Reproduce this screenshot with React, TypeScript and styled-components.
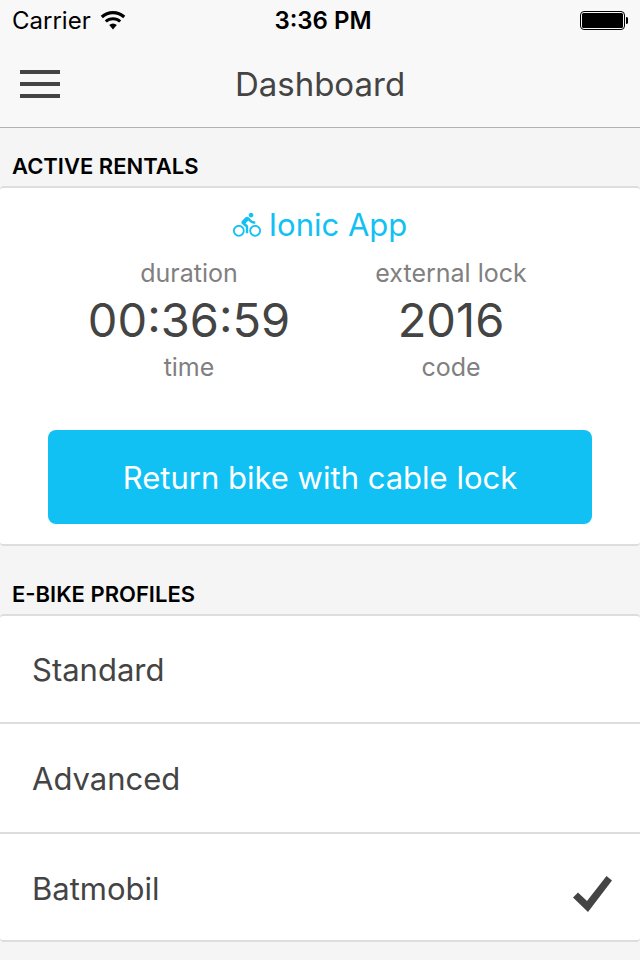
import React, { useState } from "react";
import styled, { createGlobalStyle } from "styled-components";
import { MdDirectionsBike } from "react-icons/md";

const GlobalStyle = createGlobalStyle`
  * { box-sizing: border-box; }
  body {
    margin: 0;
    background: #f5f5f5;
    color: #444;
    font-family: Inter, "Liberation Sans", sans-serif;
  }
  h1, h2, h3, p { margin: 0; font-weight: 400; }
`;

const TopArea = styled.header`
  background: #f8f8f8;
  border-bottom: 1px solid #b2b2b2;
`;

const StatusBar = styled.div`
  display: grid;
  grid-template-columns: 1fr auto 1fr;
  align-items: center;
  height: 40px;
  padding: 2px 12px 0;
  color: #000;
  font-size: 24px;
  line-height: 28px;
`;

const Carrier = styled.div`
  display: flex;
  align-items: center;
  gap: 9px;
`;

const Clock = styled.time`
  font-weight: 600;
  padding-left: 6px;
`;

const Battery = styled.svg`
  justify-self: end;
`;

const TitleBar = styled.div`
  display: grid;
  grid-template-columns: 40px 1fr 40px;
  align-items: center;
  height: 87px;
  padding: 0 20px;
`;

const MenuButton = styled.button`
  display: flex;
  padding: 0;
  border: 0;
  background: none;
  cursor: pointer;
`;

const Title = styled.h1`
  font-size: 33px;
  line-height: 40px;
  text-align: center;
`;

const SectionTitle = styled.h2`
  padding: 23px 12px 5px;
  color: #000;
  font-size: 22px;
  font-weight: 600;
  line-height: 30px;
`;

const Card = styled.div`
  background: #fff;
  border: solid #ddd;
  border-width: 2px 0;
  border-radius: 4px;
`;

const RentalCard = styled(Card)`
  padding: 16px 48px 20px;
  margin-bottom: 10px;
`;

const RentalName = styled.h3`
  display: flex;
  justify-content: center;
  align-items: center;
  gap: 8px;
  color: #11c1f3;
  font-size: 31px;
  line-height: 42px;
`;

const Stats = styled.div`
  display: grid;
  grid-template-columns: 1fr 1fr;
  margin: 12px 0 48px;
  padding: 0 10px;
  text-align: center;
`;

const Caption = styled.p`
  color: #808080;
  font-size: 25px;
  line-height: 30px;
`;

const Value = styled.p`
  font-size: 47px;
  line-height: 64px;
`;

const ReturnButton = styled.button`
  display: block;
  width: 100%;
  padding: 27px 12px 25px;
  border: 0;
  border-radius: 8px;
  background: #11c1f3;
  color: #fff;
  font: inherit;
  font-size: 31px;
  line-height: 42px;
  cursor: pointer;
`;

const ProfileRow = styled.label`
  display: flex;
  align-items: center;
  padding: 34px 28px 32px 32px;
  font-size: 31px;
  line-height: 42px;
  cursor: pointer;

  &:first-child { padding-top: 33px; padding-bottom: 31px; }
  &:last-child { padding-bottom: 30px; }
  & + & { border-top: 2px solid #ddd; }
`;

const ProfileRadio = styled.input`
  appearance: none;
  width: 0;
  height: 0;
  margin: 0;
`;

const ProfileName = styled.span`
  flex: 1;
`;

const CheckIcon = styled.svg`
  overflow: visible;
`;

const Profile = ({ name, checked, onSelect }: { name: string; checked: boolean; onSelect: () => void }) => (
  <ProfileRow>
    <ProfileRadio type="radio" name="profile" checked={checked} onChange={onSelect} />
    <ProfileName>{name}</ProfileName>
    {checked && (
      <CheckIcon width="40" height="42" viewBox="0 0 40 42" aria-hidden="true">
        <path d="M1 29.500L6 24.500L15 33L34.500 8L40 12.500L16 44Z" fill="#444" />
      </CheckIcon>
    )}
  </ProfileRow>
);

const profiles = ["Standard", "Advanced", "Batmobil"];

export default function App() {
  const [selected, setSelected] = useState("Batmobil");
  return (
    <>
      <GlobalStyle />
      <TopArea>
        <StatusBar>
          <Carrier>
            Carrier
            <svg width="26" height="20" viewBox="0 1 26 20" aria-label="Wi-Fi">
              <path d="M1.800 7A16.500 16.500 0 0 1 24.200 7" fill="none" stroke="#000" strokeWidth="3.200" />
              <path d="M5.800 11.500A10.500 10.500 0 0 1 20.200 11.500" fill="none" stroke="#000" strokeWidth="3" />
              <path d="M9.200 14.900A5.500 5.500 0 0 1 16.800 14.900L13 19.500Z" />
            </svg>
          </Carrier>
          <Clock>3:36 PM</Clock>
          <Battery width="48" height="20" viewBox="0 1 48 20" aria-label="Battery full">
            <rect x="0.500" y="1.500" width="44" height="18" rx="3.500" fill="none" stroke="#000" />
            <rect x="2" y="3" width="41" height="15" rx="1.500" />
            <path d="M46 7Q49 7.500 49 10.500T46 14Z" />
          </Battery>
        </StatusBar>
        <TitleBar>
          <MenuButton type="button" aria-label="Menu">
            <svg width="40" height="30" viewBox="0 0 40 30">
              <path d="M0 3H40M0 15H40M0 27H40" stroke="#444" strokeWidth="4" />
            </svg>
          </MenuButton>
          <Title>Dashboard</Title>
        </TitleBar>
      </TopArea>
      <main>
        <section>
          <SectionTitle>ACTIVE RENTALS</SectionTitle>
          <RentalCard>
            <RentalName>
              <MdDirectionsBike size={28} aria-hidden="true" />
              Ionic App
            </RentalName>
            <Stats>
              <div>
                <Caption>duration</Caption>
                <Value>00:36:59</Value>
                <Caption>time</Caption>
              </div>
              <div>
                <Caption>external lock</Caption>
                <Value>2016</Value>
                <Caption>code</Caption>
              </div>
            </Stats>
            <ReturnButton type="button">Return bike with cable lock</ReturnButton>
          </RentalCard>
        </section>
        <section>
          <SectionTitle id="profiles">E-BIKE PROFILES</SectionTitle>
          <Card role="radiogroup" aria-labelledby="profiles">
            {profiles.map((name) => (
              <Profile key={name} name={name} checked={name === selected} onSelect={() => setSelected(name)} />
            ))}
          </Card>
        </section>
      </main>
    </>
  );
}
